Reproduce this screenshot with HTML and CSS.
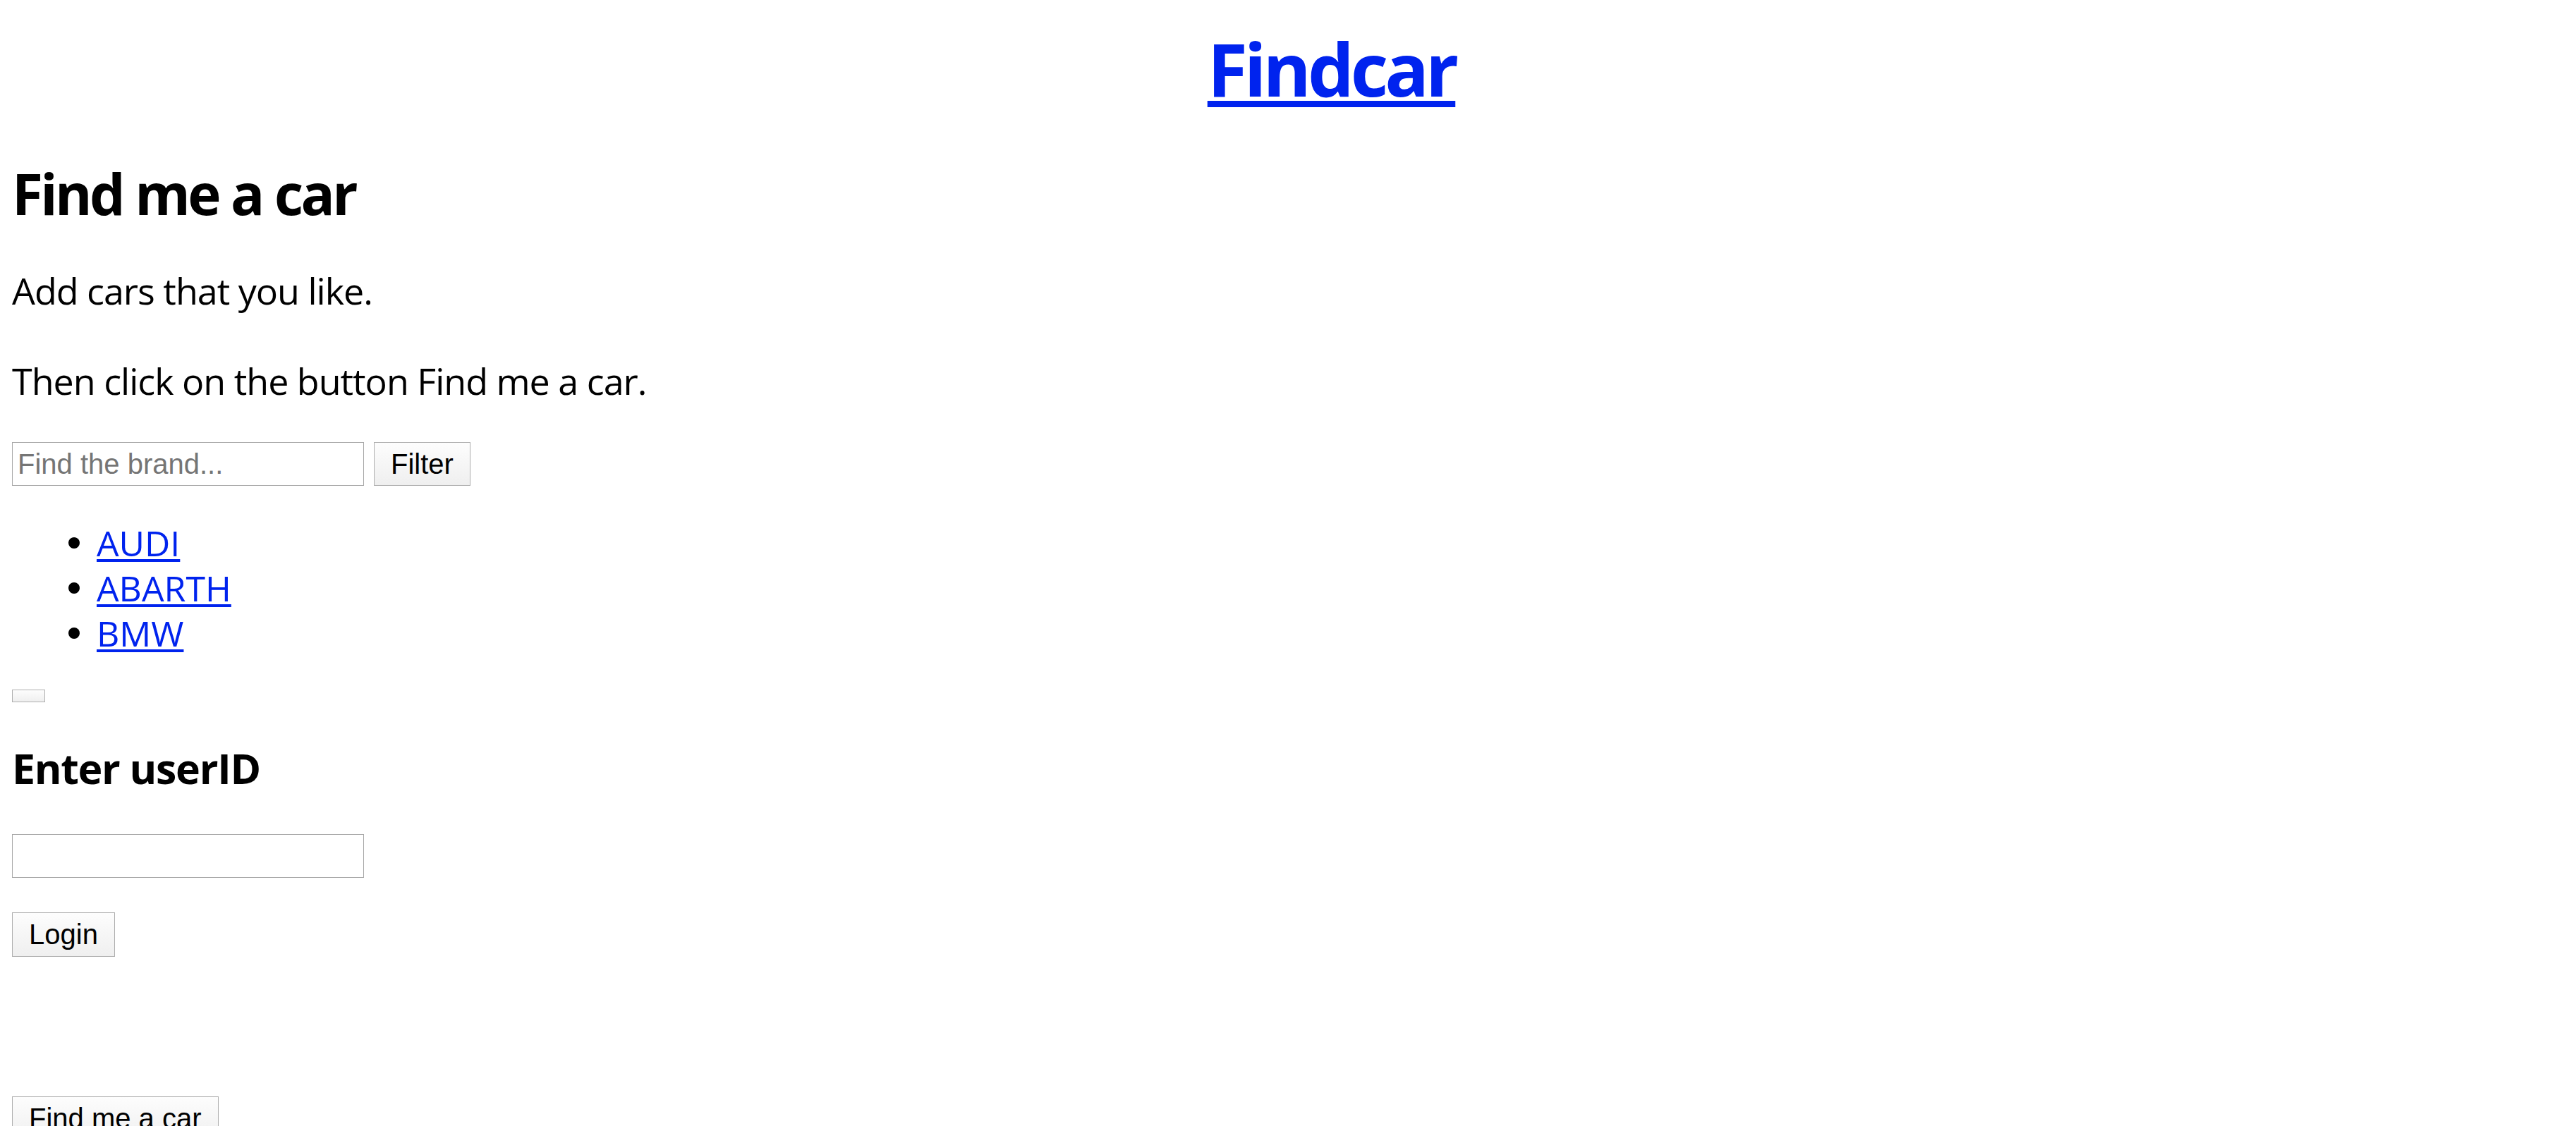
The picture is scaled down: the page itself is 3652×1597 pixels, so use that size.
FILE: index.html
```html
<!DOCTYPE html>
<html lang="en">
<head>
<meta charset="utf-8">
<title>Findcar</title>
<link rel="stylesheet" href="styles.css">
</head>
<body>
<header class="site-header">
  <h1 class="brand"><a href="#">Findcar</a></h1>
</header>
<main class="page">
  <h2 class="page-title">Find me a car</h2>
  <p class="intro">Add cars that you like.</p>
  <p class="intro intro-second">Then click on the button Find me a car.</p>
  <form class="filter">
    <input class="field" type="text" placeholder="Find the brand...">
    <button class="btn" type="button">Filter</button>
  </form>
  <ul class="brands">
    <li class="brand-item"><a href="#">AUDI</a></li>
    <li class="brand-item"><a href="#">ABARTH</a></li>
    <li class="brand-item"><a href="#">BMW</a></li>
  </ul>
  <button class="btn btn-empty" type="button"></button>
  <h3 class="section-title">Enter userID</h3>
  <input class="field field-user" type="text">
  <button class="btn btn-login" type="button">Login</button>
  <button class="btn btn-find" type="button">Find me a car</button>
</main>
</body>
</html>
```

FILE: styles.css
```css
html, body {
  margin: 0;
  padding: 0;
  background: #ffffff;
}

body {
  font-family: "Open Sans", "Noto Sans", sans-serif;
  color: #000000;
}

a {
  color: #0023ee;
}

.site-header {
  padding-left: 123px;
  text-align: center;
}

.brand {
  margin: 45px 0 0 0;
  font-size: 104px;
  line-height: 104px;
  font-weight: 700;
  letter-spacing: -5px;
}

.brand a {
  text-decoration-thickness: 9px;
  text-underline-offset: 6px;
}

.page {
  display: flex;
  flex-direction: column;
  align-items: flex-start;
  padding: 0 17px;
}

.page-title {
  margin: 85px 0 0 0;
  font-size: 80px;
  line-height: 80px;
  font-weight: 700;
  letter-spacing: -3.6px;
}

.intro {
  margin: 72px 0 0 0;
  font-size: 52px;
  line-height: 52px;
  letter-spacing: -1px;
}

.intro-second {
  margin-top: 76px;
}

.filter {
  display: flex;
  gap: 14px;
  margin: 61px 0 0 0;
}

.field {
  box-sizing: border-box;
  width: 499px;
  height: 62px;
  margin: 0;
  padding: 0 7px;
  border: 1px solid #a6a6a6;
  font-family: "Liberation Sans", Arial, sans-serif;
  font-size: 40px;
  color: #000;
  background: #fff;
}

.field::placeholder {
  color: #757575;
}

.btn {
  box-sizing: border-box;
  height: 62px;
  margin: 0;
  padding: 0 23px;
  border: 1px solid #adadad;
  border-radius: 0;
  background: linear-gradient(#fdfdfd, #efefef);
  font-family: "Liberation Sans", Arial, sans-serif;
  font-size: 40px;
  color: #000;
}

.brands {
  list-style: none;
  margin: 49px 0 0 0;
  padding: 0;
  font-size: 50px;
  line-height: 64px;
}

.brand-item {
  display: flex;
  align-items: center;
}

.brand-item::before {
  content: "";
  width: 16px;
  height: 16px;
  margin: 0 24px 0 80px;
  border-radius: 50%;
  background: #000;
}

.brand-item a {
  text-decoration-thickness: 4px;
  text-underline-offset: 4px;
}

.btn-empty {
  width: 47px;
  height: 18px;
  padding: 0;
  margin-top: 48px;
}

.section-title {
  margin: 64px 0 0 0;
  font-size: 59px;
  line-height: 59px;
  font-weight: 700;
  letter-spacing: -1.3px;
}

.field-user {
  margin-top: 64px;
}

.btn-login {
  margin-top: 49px;
  height: 63px;
}

.btn-find {
  margin-top: 198px;
  height: 63px;
}
```
